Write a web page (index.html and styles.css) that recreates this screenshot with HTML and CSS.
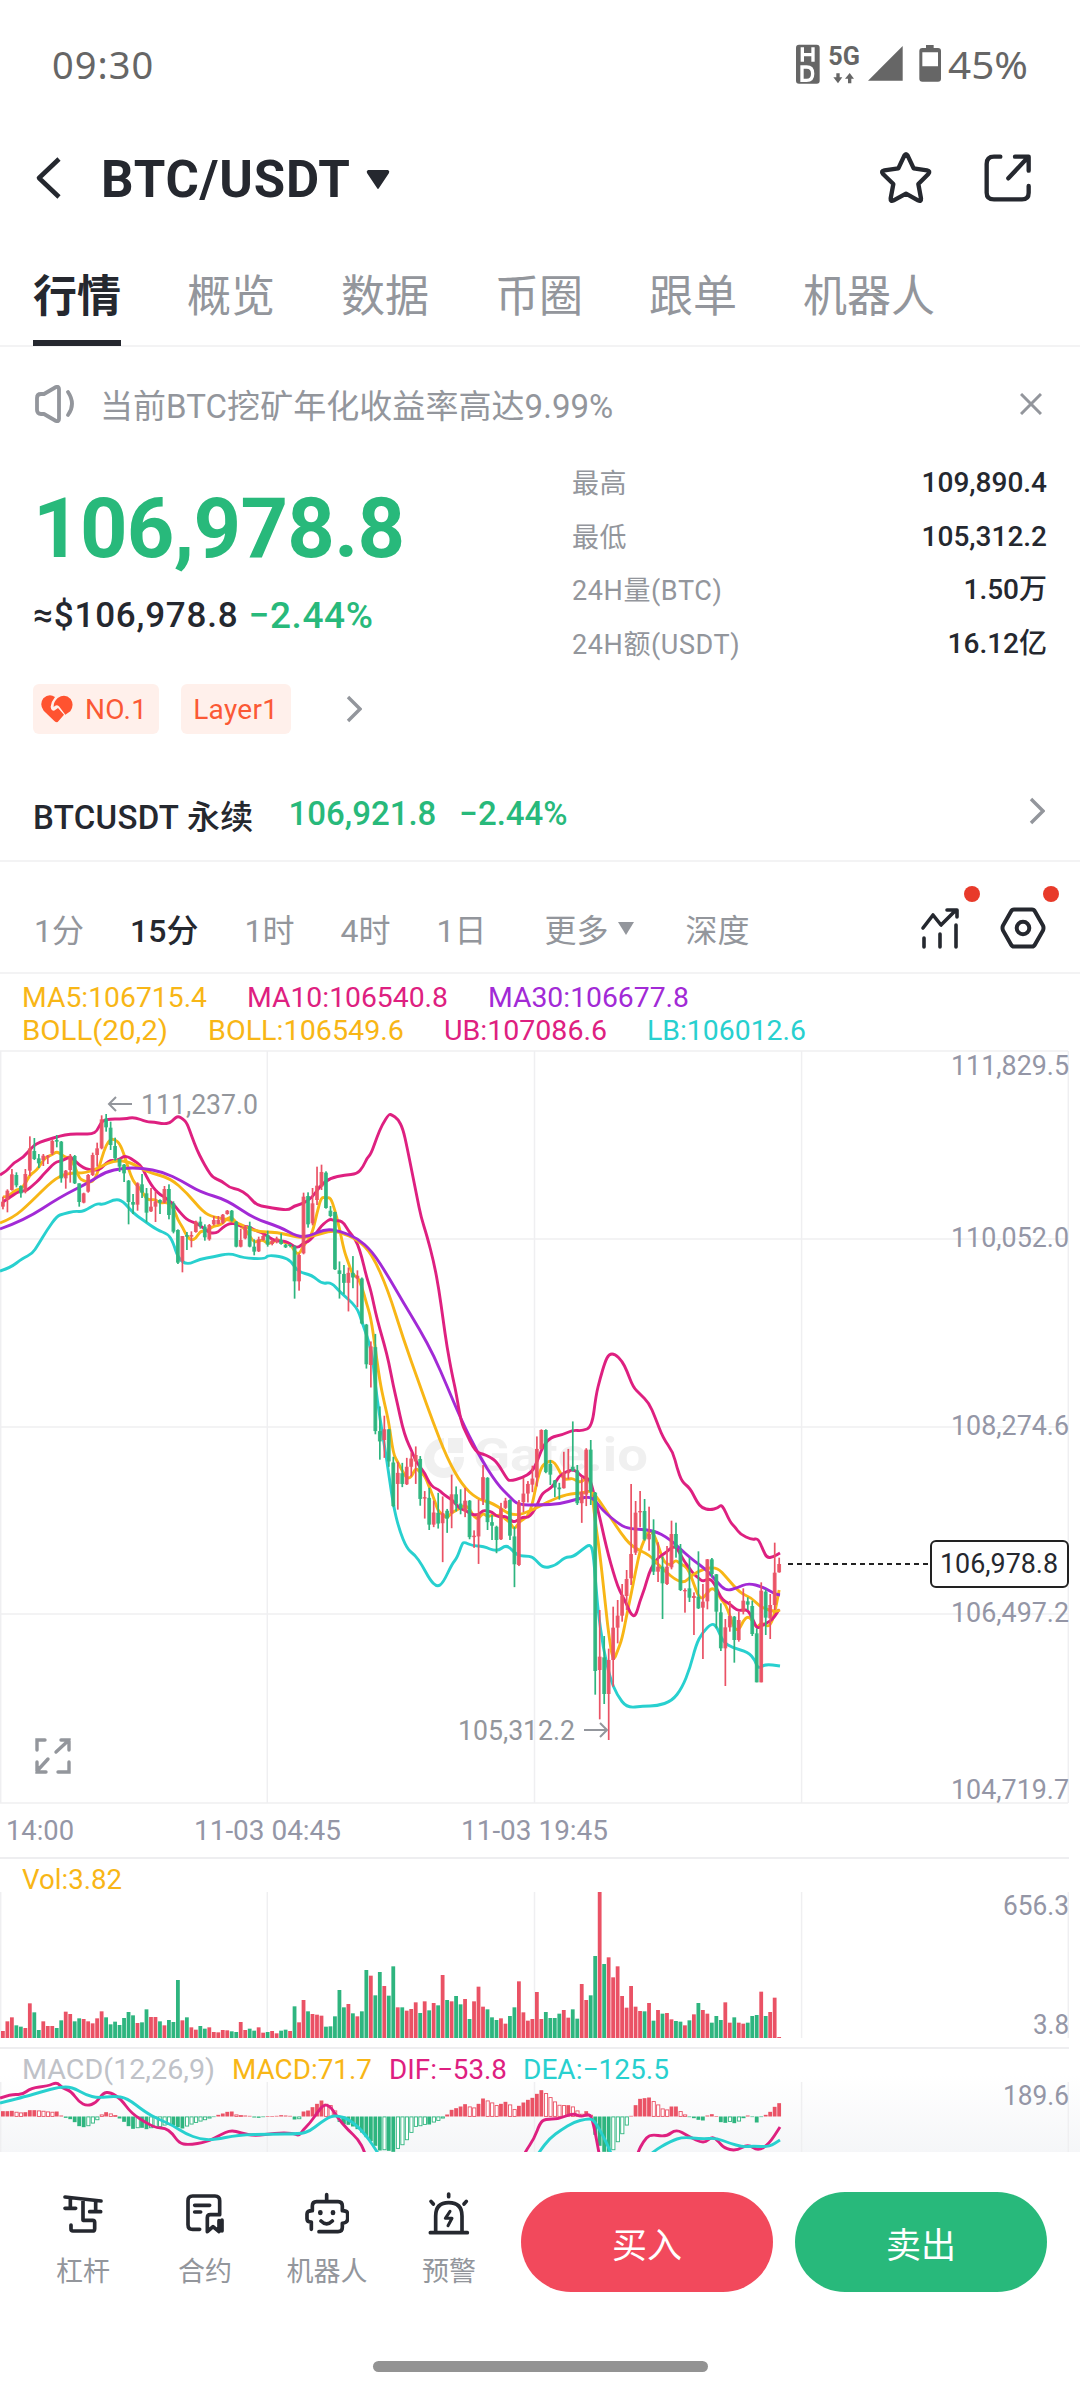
FILE: index.html
```html
<!DOCTYPE html>
<html lang="zh-CN">
<head>
<meta charset="utf-8">
<title>BTC/USDT</title>
<link rel="stylesheet" href="styles.css">
</head>
<body>
<div class="status">
  <span class="clock">09:30</span>
  <div class="status-icons">
    <svg width="250" height="56" viewBox="0 0 750 168">
      <rect x="3" y="26" width="71" height="117" rx="9" fill="#666"/>
      <g fill="none" stroke="#fff" stroke-width="10"><path d="M22 34v43M54 34v43M22 56h32"/><path d="M21 97v35M21 93h14q18 0 18 20t-18 20H21z"/></g>
      <text class="net" x="100" y="86" textLength="95" lengthAdjust="spacingAndGlyphs">5G</text>
      <g fill="#666"><path d="M124 112h10v12h8l-13 18-14-18h9zM159 142h10v-14h8l-13-17-14 17h9z"/><path d="M219 134L323 30v104z"/><path d="M393 27h23v9h13q9 0 9 9v83q0 9-9 9h-47q-9 0-9-9V45q0-9 9-9h11zM382 49v42h47V49z" fill-rule="evenodd"/></g>
      <text class="batt" x="459" y="129" textLength="240" lengthAdjust="spacingAndGlyphs">45%</text>
    </svg>
  </div>
</div>
<header class="head">
  <svg class="back" width="28" height="44" viewBox="0 0 28 44"><path d="M25 3L5 22l20 19" fill="none" stroke="#25282f" stroke-width="4.6" stroke-linejoin="round"/></svg>
  <h1>BTC/USDT</h1>
  <svg class="caret" width="24" height="20" viewBox="0 0 24 20"><path d="M2 0h20q2 1 1 3L13 18q-1 2-2 0L1 3Q0 1 2 0z" fill="#25282f"/></svg>
  <svg class="star" width="54" height="54" viewBox="0 0 162 162"><path d="M76 14q5-9 10 0l18 38 40 6q11 2 4 11l-30 30 8 43q1 11-9 6l-36-20-37 20q-10 5-9-6l8-43L12 69q-7-9 4-11l42-6z" fill="none" stroke="#25282f" stroke-width="13" stroke-linejoin="round"/></svg>
  <svg width="48" height="48" viewBox="0 0 144 144"><path d="M49 8H30Q8 8 8 30v86q0 20 22 20h84q20 0 20-20V96M93 8h41v42M132 10L73 73" fill="none" stroke="#25282f" stroke-width="13" stroke-linecap="round" stroke-linejoin="round"/></svg>
</header>
<nav class="tabs"><span class="on">行情</span><span>概览</span><span>数据</span><span>币圈</span><span>跟单</span><span>机器人</span></nav>
<div class="notice">
  <svg width="42" height="38" viewBox="0 0 42 38"><path d="M10 9L22 2q3-1 3 2v30q0 3-3 2L10 29H7q-4 0-4-4V13q0-4 4-4zM34 7q8 12 0 23" fill="none" stroke="#93969c" stroke-width="3.8" stroke-linecap="round" stroke-linejoin="round"/></svg>
  <p>当前BTC挖矿年化收益率高达9.99%</p>
  <svg width="22" height="22" viewBox="0 0 22 22"><path d="M1 1l20 20M21 1L1 21" stroke="#93969c" stroke-width="3"/></svg>
</div>
<section class="quote">
  <div class="price">
    <strong>106,978.8</strong>
    <div class="fiat"><span>≈$106,978.8</span><em>−2.44%</em></div>
    <div class="tags">
      <span class="tag"><svg width="32" height="28" viewBox="0 0 96 84"><path d="M48 82Q44 82 40 78L8 47Q-6 28 7 10 24-6 42 6 31 19 29 35q1 12 10 12l12-8 18 20-17 20q-2 3-4 3zM50 9Q72-6 89 12q12 18-1 37L73 59 54 34Q46 27 38 36q-1-15 12-27z" fill="#ff5330"/></svg><b class="rank">NO.1</b></span>
      <span class="tag layer">Layer1</span>
      <svg class="more" width="16" height="28" viewBox="0 0 16 28"><path d="M2 2l12 12L2 26" fill="none" stroke="#93969c" stroke-width="3.4"/></svg>
    </div>
  </div>
  <dl class="stats">
    <dt>最高</dt><dd>109,890.4</dd>
    <dt>最低</dt><dd>105,312.2</dd>
    <dt>24H量(BTC)</dt><dd>1.50万</dd>
    <dt>24H额(USDT)</dt><dd>16.12亿</dd>
  </dl>
</section>
<div class="perp">
  <span class="name">BTCUSDT 永续</span><span class="up p">106,921.8</span><span class="up c">−2.44%</span>
  <svg width="16" height="28" viewBox="0 0 16 28"><path d="M2 2l12 12L2 26" fill="none" stroke="#93969c" stroke-width="3.4"/></svg>
</div>
<div class="periods">
  <span>1分</span><span class="on">15分</span><span>1时</span><span>4时</span><span>1日</span><span class="drop">更多<i></i></span><span>深度</span>
  <div class="tools">
    <div class="tool trend"><svg width="40" height="42" viewBox="0 0 40 42"><path d="M3 21L13 8l8 10L35 4M27 3h10v7M4 31v9M20 27v13M36 18v22" fill="none" stroke="#25282f" stroke-width="3.6" stroke-linecap="round" stroke-linejoin="round"/></svg><i></i></div>
    <div class="tool"><svg width="46" height="42" viewBox="0 0 46 42"><path d="M14 2.500h18q2 0 3 2l8 14q1 2.500 0 5l-8 14q-1 2-3 2H14q-2 0-3-2l-8-14q-1-2.500 0-5l8-14q1-2 3-2z" fill="none" stroke="#25282f" stroke-width="4"/><circle cx="23" cy="21" r="6.300" fill="none" stroke="#25282f" stroke-width="4"/></svg><i></i></div>
  </div>
</div>
<svg id="chart" class="chart" width="1080" height="1178" viewBox="0 974 1080 1178"></svg>
<footer class="bar">
  <div class="links">
    <div><svg width="44" height="44" viewBox="0 0 132 132"><path d="M12 15l108 12M28 18v30M12 49h32M104 27v31M86 59h33M66 22v63h29q6 0 6 6v19q0 7-7 7H36q-6 0-6-6V99" /></svg><span>杠杆</span></div>
    <div><svg width="44" height="44" viewBox="0 0 132 132"><path d="M50 112H29Q15 112 15 98V26q0-14 14-14h67q14 0 14 14v42H82q-9 0-9 9v42l17-15 18 15V86M35 40h45M35 60h18M117 84v33l-10-9"/></svg><span>合约</span></div>
    <div><svg width="44" height="44" viewBox="0 0 132 132"><path d="M65 8v21M42 119h57q13 0 13-13V94q16-2 16-14V66q0-10-16-10v-14q0-13-13-13H35q-13 0-13 13v14Q6 56 6 66v14q0 10 13 10v22M48 87q17 17 34 0"/><path class="eyes" d="M46 61v2M84 61v2"/></svg><span>机器人</span></div>
    <div><svg width="44" height="44" viewBox="0 0 132 132"><path d="M10 122h111M26 120V72q0-40 39-40 40 0 40 40v48M65 6v8M12 28l7 8M118 28l-7 8"/><path class="bolt" d="M69 58L55 79h20L63 101"/></svg><span>预警</span></div>
  </div>
  <button class="buy">买入</button>
  <button class="sell">卖出</button>
</footer>
<div class="home"><i></i></div>
<script src="chart.js"></script>
</body>
</html>
```
FILE: styles.css
```css
* { box-sizing: border-box; margin: 0; padding: 0; }
body {
  width: 1080px; height: 2400px; overflow: hidden; background: #fff; color: #25282f;
  font-family: Roboto, "Noto Sans CJK SC", sans-serif;
}
svg { display: block; flex: none; }
.status { height: 128px; display: flex; justify-content: space-between; align-items: center; padding: 0 35px 0 52px; color: #666; }
.clock { font: 38px/50px "Noto Sans", sans-serif; letter-spacing: 1px; }
.net { font: 700 78px Roboto, sans-serif; fill: #666; }
.batt { font: 114px "Noto Sans", sans-serif; fill: #666; }
.head { height: 100px; display: flex; align-items: center; padding: 0 48px 0 34px; }
.head h1 { font-size: 51px; line-height: 60px; font-weight: 700; margin: 4px 0 0 39px; letter-spacing: .8px; }
.caret { margin-left: 15px; margin-top: 4px; }
.star { margin-left: auto; margin-right: 51px; }
.tabs { height: 119px; display: flex; gap: 66px; padding-left: 33px; border-bottom: 2px solid #f3f3f4; font-size: 44px; line-height: 138px; color: #93969c; }
.tabs .on { color: #25282f; font-weight: 700; border-bottom: 6px solid #25282f; height: 118px; }
.notice { height: 114px; display: flex; align-items: center; padding: 0 38px 0 34px; color: #93969c; }
.notice p { font-size: 33px; margin: -1px auto 0 24px; letter-spacing: .05px; }
.quote { height: 300px; display: flex; justify-content: space-between; padding: 0 33px; }
.price { display: flex; flex-direction: column; }
.price strong { font-size: 83px; line-height: 96px; color: #28b97b; margin-top: 20px; letter-spacing: -.7px; }
.fiat { display: flex; align-items: center; gap: 10px; font-size: 35px; line-height: 44px; font-weight: 500; margin-top: 17px; letter-spacing: .8px; }
.fiat em { font-style: normal; font-size: 37px; letter-spacing: .6px; color: #28b97b; }
.tags { display: flex; align-items: center; gap: 22px; margin-top: 46px; font-size: 28px; color: #fb5935; }
.tag { height: 50px; display: flex; align-items: center; gap: 12px; padding: 0 12px 0 8px; border-radius: 6px; background: #fff0eb; letter-spacing: .3px; }
.tag.layer { padding: 0 13px 0 12px; }
.rank { font-weight: 400; }
.more { margin-left: 33px; }
.stats { width: 475px; display: grid; grid-template-columns: auto auto; grid-auto-rows: 53.5px; justify-content: space-between; line-height: 53.5px; font-size: 27px; margin-top: -5px; }
.stats dt { color: #93969c; letter-spacing: .6px; padding-top: 2px; }
.stats dd { font-weight: 500; font-size: 28px; text-align: right; }
.perp { height: 101px; display: flex; align-items: center; padding: 7px 35px 0 33px; border-bottom: 2px solid #f3f3f4; font-size: 33px; }
.perp .name { margin-top: 2px; font-weight: 500; letter-spacing: .3px; }
.perp .up { color: #28b97b; font-weight: 500; margin-top: -2px; }
.perp .p { margin-left: 35px; }
.perp .c { margin-left: 23px; margin-right: auto; }
.perp svg { margin-top: -7px; }
.periods { height: 112px; display: flex; align-items: center; padding: 22px 34px 0 34px; border-bottom: 2px solid #f3f3f4; font-size: 32px; color: #93969c; }
.periods span { margin-right: 46px; }
.periods .on { color: #25282f; font-weight: 500; }
.periods .drop { display: flex; align-items: center; gap: 10px; margin: 0 51px 0 12px; }
.drop i { border: 8px solid transparent; border-top: 13px solid #93969c; border-bottom: 0; }
.tools { margin-left: auto; display: flex; gap: 40px; }
.tool { position: relative; }
.tool i { position: absolute; width: 16px; height: 16px; border-radius: 50%; background: #e83a2a; top: -21px; right: -13px; }
.trend i { right: -20px; }
.chart { font-family: Roboto, sans-serif; font-size: 28px; }
.bar { height: 188px; display: flex; gap: 22px; padding: 40px 33px 48px 22px; align-items: flex-start; background: #fff; }
.links { display: grid; grid-template-columns: repeat(4, 122px); margin-right: -11px; }
.links div { display: flex; flex-direction: column; align-items: center; font-size: 27px; line-height: 36px; color: #93969c; gap: 18px; }
.links svg { fill: none; stroke: #25282f; stroke-width: 11; stroke-linecap: round; stroke-linejoin: round; }
.links .eyes { stroke-width: 14; }
.links .bolt { stroke-width: 9; }
.bar button { width: 252px; height: 100px; border: 0; border-radius: 50px; color: #fff; font: 35px "Noto Sans CJK SC", sans-serif; }
.buy { background: #f2495c; }
.sell { background: #28b97b; }
.home { height: 60px; padding-top: 21px; }
.home i { display: block; width: 335px; height: 11px; margin: 0 auto; border-radius: 6px; background: #939393; }
```
FILE: chart.js
```js
const RED = '#ea5265', GREEN = '#2eb57f', YELLOW = '#f8b616', PINK = '#de2080', PURPLE = '#a22ad6', TEAL = '#28d0cf', GREY = '#93969c', MUTE = '#9496a6';
const STEP = 4.487, X0 = 2.9;
const x = i => X0 + i * STEP;

// Volume per bar, in thirds of a pixel; g = falling, r = rising
const volumes = `21r 50r 62r 38g 34g 30r 104r 77g 24g 50r 36r 36r 30g 53g 79r 72r 50g 59g 57r 50r 44r 59r 80r 62g 41g 49g 39g 60g 78g 68g 45r 47g 86g 63r 63r 50g 38r 54g 48g 174g 53r 62g 32r 25r 36g 28g 32r 18r 17r 24r 23r 20g 18g 48r 24r 28g 22g 32r 16r 18g 21r 14r 22g 25g 21r 95g 47r 114r 80g 72r 70r 67r 34g 35g 65g 144g 92g 102r 74g 65r 80g 204g 187r 128g 198g 156r 127g 215g 92r 92g 82r 87r 107r 75g 110r 83g 105r 98g 189r 114g 110r 126g 101g 117r 57g 110r 154r 94r 86g 62g 54g 59r 43r 66g 92g 170r 77r 52r 57r 138r 57r 78g 60g 60g 73g 84r 61r 86g 58g 162r 114r 128g 246g 438r 222g 242r 182r 215r 126r 91r 156r 94r 81r 80g 105r 52g 84r 73g 75r 56r 51g 49g 38r 53g 71r 105g 84r 73r 46g 66g 54g 107r 46r 62g 46r 43r 46g 66g 69g 139r 66g 78r 121r 3r`.split(' ');

// Candles: side, high, low, body top, body bottom. Each block has its own origin and unit.
const blocks = [
  { y: 1040, unit: 3, rows: `r470,508,485,500 r448,517,452,480 r387,452,403,450 g397,442,405,436 g436,473,438,460 r387,460,402,456 r289,408,325,392 g294,360,333,357 g342,384,355,370 r342,378,347,360 r345,372,347,352 r298,345,303,340 g285,322,300,305 g303,428,305,415 r390,446,392,415 r342,428,347,390 g345,432,348,430 g430,500,430,486 r458,490,460,488 r402,458,405,455 r338,408,345,405 r308,380,325,345 r226,328,238,325 g222,275,236,262 g245,330,263,315 g293,362,318,355 g355,396,357,380 g372,426,374,400 g420,553,422,486 g462,522,486,494 r427,512,430,494 g402,474,433,458 g444,547,460,518 r444,516,500,514 r454,546,484,500 g478,522,480,488 r438,490,447,488 g433,538,447,525 g484,580,490,575 g568,672,570,668 r588,697,588,664 g576,630,585,590 r574,622,585,590 r542,578,545,576 g530,566,545,558 g553,602,560,592 r552,602,555,598 r528,556,540,553 r528,553,540,552 r522,552,524,548 r510,524,512,522 g510,545,512,542 g543,622,545,620 r566,622,600,620 r555,598,560,595 g545,622,558,620 g598,646,620,635 r590,636,598,634 r583,602,588,600 g572,620,585,614 r598,616,602,612 r590,610,595,606 g580,614,600,612 g612,624,614,622 g612,622,614,618 g616,776,620,724 r640,752,645,724 r458,643,470,640 g457,563,468,553 r444,556,490,550 r380,495,437,480 r374,450,396,440 g394,506,398,504 g498,532,512,528 g515,690,516,688` },
  { y: 1040, unit: 2.8, rows: `g620,724,645,655 g630,712,655,680 r637,760,652,680 g605,695,652,665 r645,748,660,668 g665,796,668,794 g795,920,797,908 r844,973,858,910 g823,1104,860,1095 g1026,1175,1095,1124 r1052,1170,1090,1120 g1090,1195,1090,1180 g1167,1308,1183,1305 r1181,1315,1212,1243 g1184,1252,1213,1243 r1170,1246,1195,1244 r1155,1222,1172,1195 r1138,1243,1162,1180 g1165,1304,1173,1285 r1263,1340,1280,1284 g1254,1372,1282,1357 r1290,1364,1323,1357 g1268,1368,1324,1354 r1278,1462,1325,1353 g1313,1380,1318,1340 r1217,1367,1272,1325 g1250,1320,1272,1298 g1258,1328,1298,1312 r1254,1336,1290,1320 g1288,1398,1290,1392 r1373,1422,1388,1392 r1287,1467,1325,1390 r1190,1302,1224,1287 g1224,1372,1226,1350 g1330,1400,1350,1360 g1360,1437,1363,1400 r1296,1400,1312,1398 r1282,1313,1290,1310 g1286,1400,1288,1388 g1363,1532,1390,1468 r1288,1473,1295,1470 r1226,1322,1270,1294 r1235,1295,1243,1270 r1192,1266,1228,1245 r1110,1250,1145,1225 r1090,1146,1092,1145 g1090,1213,1092,1210 g1176,1246,1187,1217 g1232,1280,1233,1253 g1240,1287,1253,1258 r1153,1256,1212,1255 r1145,1230,1208,1213 g1068,1208,1195,1206 g1190,1302,1205,1297 r1223,1352,1265,1297 r1143,1305,1147,1273 g1120,1302,1147,1265` },
  { y: 1300, unit: 3, rows: `g576,1184,578,1113 r930,1258,1070,1110 g1008,1212,1072,1182 r1046,1320,1080,1182 r920,1160,983,1080 r900,1030,947,983 r852,965,888,947 r810,930,837,888 r552,855,762,835 r603,765,638,758 r573,682,633,637 g597,722,633,718 r620,752,702,718 g658,825,690,815 r727,846,800,815 g770,957,800,850 r738,855,800,852 r662,808,702,802 g668,773,702,743 g732,873,750,870 r865,938,870,874 g773,906,865,893 r877,1005,888,894 g754,927,890,925 r852,1077,905,923 r777,928,778,904 g774,832,778,822 g822,985,823,935 g910,1053,937,1045 r957,1158,982,1045 r903,995,948,982 g948,1088,950,1020 r935,1025,960,1020 r865,943,902,935 g892,930,904,914 g902,1008,918,1002 g985,1147,1000,1147 r847,1147,872,1147 g868,1005,875,953 r882,1017,915,955 r728,930,818,915 r773,818,792,817` }
];
const candles = blocks.flatMap(b => b.rows.split(' ').map(s => {
  const [hi, lo, top, bot] = s.slice(1).split(',').map(v => b.y + v / b.unit);
  return { up: s[0] === 'r', hi, lo, top, bot, close: s[0] === 'r' ? top : bot };
}));

const macd = [16,16,17,14,12,13,19,19,18,17,15,14,15,3,-4,-8,-17,-29,-32,-28,-20,-10,6,13,9,4,-6,-16,-29,-37,-34,-34,-38,-34,-33,-30,-26,-24,-27,-32,-36,-29,-23,-18,-14,-10,-5,-1,5,9,14,15,6,4,3,2,-3,-4,-2,1,1,2,4,3,2,-9,-7,15,18,28,38,48,38,34,18,-15,-23,-25,-30,-38,-48,-62,-74,-88,-102,-100,-103,-106,-96,-85,-70,-48,-30,-28,-24,-24,-17,-12,-5,6,20,25,30,37,30,27,38,54,48,42,34,38,44,36,22,32,42,50,56,68,79,70,58,45,35,34,34,30,18,8,16,5,-55,-88,-106,-106,-100,-76,-52,-26,2,34,53,55,57,46,36,24,21,30,30,16,6,-2,-5,-10,-12,3,7,1,-17,-19,-15,-20,-14,-4,3,0,-18,0,5,14,29,40];

const upper = '0,1175 7,1171 13,1163 23,1158 33,1146 40,1142 50,1139 60,1136 70,1134 83,1134 92,1134 97,1131 100,1124 105,1119 125,1119 134,1117 147,1122 154,1122 163,1124 170,1123 174,1119 178,1116 183,1119 187,1123 192,1137 197,1150 202,1160 207,1169 213,1178 222,1181 230,1188 238,1189 248,1195 256,1205 267,1207 278,1209 289,1210 294,1206 302,1204 312,1198 320,1186 330,1178 345,1175 357,1174 363,1167 367,1158 371,1154 377,1137 382,1125 389,1114 392,1115 398,1119 403,1129 407,1147 412,1172 417,1197 421,1217 427,1236 434,1263 439,1290 443,1319 447,1347 452,1374 456,1392 461,1422 467,1435 473,1447 478,1453 483,1454 490,1457 497,1462 507,1479 510,1481 522,1478 532,1472 537,1462 543,1446 551,1437 562,1435 573,1430 582,1431 592,1427 596,1395 600,1379 605,1362 609,1354 615,1354 622,1361 627,1371 633,1387 640,1394 649,1403 655,1417 663,1438 673,1452 677,1468 682,1482 690,1488 697,1502 702,1508 710,1510 718,1508 722,1504 730,1522 735,1527 740,1534 752,1540 758,1538 763,1550 767,1558 773,1557 780,1553';
const lower = '0,1271 10,1268 23,1258 32,1254 38,1245 47,1230 57,1216 63,1214 75,1211 83,1212 97,1203 103,1205 115,1199 123,1201 133,1213 143,1220 157,1230 168,1234 173,1242 178,1258 187,1265 200,1259 213,1257 230,1253 243,1258 265,1259 268,1255 283,1257 291,1261 298,1272 312,1275 322,1284 331,1282 340,1292 357,1307 362,1322 372,1351 375,1383 380,1419 387,1461 393,1504 399,1529 407,1549 415,1555 422,1565 430,1580 437,1587 443,1583 452,1564 457,1558 462,1544 464,1542 473,1546 483,1546 497,1552 507,1544 517,1556 530,1556 535,1559 543,1568 555,1566 565,1557 573,1557 583,1549 590,1544 593,1551 596,1586 598,1610 603,1647 610,1678 617,1695 627,1708 643,1706 657,1706 672,1701 682,1688 690,1668 696,1645 702,1633 712,1623 717,1627 723,1642 733,1648 748,1652 755,1660 758,1669 765,1664 780,1666';
const ma30 = '0,1229 25,1220 60,1197 90,1182 105,1172 123,1168 142,1168 163,1172 182,1181 200,1192 227,1200 253,1218 280,1227 298,1237 310,1236 325,1229 340,1231 357,1238 372,1251 388,1276 403,1302 420,1330 434,1356 447,1386 460,1417 478,1454 497,1484 510,1497 518,1505 540,1505 560,1504 577,1499 592,1496 602,1510 620,1525 630,1529 653,1530 670,1539 690,1558 707,1570 717,1582 726,1591 737,1588 748,1583 763,1587 775,1594 780,1595';
const middle = '0,1223 13,1218 30,1203 53,1180 67,1173 87,1173 100,1167 115,1160 130,1162 147,1172 170,1178 187,1193 203,1212 213,1217 230,1220 240,1224 257,1232 277,1232 300,1238 313,1236 330,1231 340,1232 358,1240 372,1254 388,1290 403,1338 420,1386 433,1422 447,1458 462,1485 477,1499 493,1503 513,1517 533,1510 547,1502 567,1494 583,1493 592,1490 607,1512 620,1532 632,1547 650,1555 660,1567 682,1585 692,1575 703,1569 717,1567 727,1578 740,1593 752,1598 760,1607 775,1612 780,1610';
const dif = '0,2098 12,2094 22,2095 31,2088 48,2086 57,2082 62,2088 71,2091 79,2102 87,2106 96,2103 103,2093 110,2092 121,2099 131,2113 148,2124 157,2128 165,2128 172,2133 179,2143 188,2145 207,2142 220,2135 231,2130 241,2133 255,2136 275,2133 293,2133 299,2136 303,2130 310,2123 317,2113 324,2104 331,2107 337,2117 348,2130 358,2139 365,2152 380,2200 500,2200 525,2152 534,2139 540,2123 545,2119 559,2119 573,2113 581,2117 588,2114 592,2117 599,2152 605,2190 625,2190 638,2152 643,2142 650,2134 666,2137 676,2129 688,2136 704,2144 712,2136 719,2142 724,2148 736,2151 748,2144 758,2151 769,2144 780,2127';
const dea = '0,2103 24,2097 41,2092 59,2087 72,2087 86,2095 98,2098 114,2096 127,2098 145,2112 158,2119 172,2125 186,2134 200,2139 213,2140 238,2135 269,2134 300,2134 310,2131 320,2123 331,2116 339,2116 348,2119 362,2130 377,2151 400,2190 515,2190 539,2152 550,2138 561,2130 574,2122 586,2119 593,2119 600,2130 611,2152 620,2180 635,2170 652,2152 671,2141 683,2137 702,2139 716,2138 729,2143 743,2147 753,2146 769,2147 780,2140';

// Moving average of the closes; `lead` holds the values before the window is full
function average(n, lead) {
  return candles.map((c, i) => {
    const y = i < n - 1 ? lead[i] : candles.slice(i - n + 1, i + 1).reduce((s, k) => s + k.close, 0) / n;
    return [x(i), y];
  });
}
const ma5 = average(5, [1197, 1197, 1193, 1190]);
const ma10 = average(10, [1202, 1199, 1196, 1193, 1191, 1191, 1188, 1184, 1180]);
const points = s => s.split(' ').map(p => p.split(',').map(Number));

// Smooth line through the midpoints of the given points
function curve(pts, color) {
  let d = `M${pts[0]}`;
  for (let i = 1; i < pts.length - 1; i++) {
    const m = [(pts[i][0] + pts[i + 1][0]) / 2, (pts[i][1] + pts[i + 1][1]) / 2];
    d += `Q${pts[i]} ${m}`;
  }
  d += `L${pts[pts.length - 1]}`;
  return `<path d="${d}" fill="none" stroke="${color}" stroke-width="2.9" stroke-linejoin="round"/>`;
}
const line = (x1, y1, x2, y2, c = '#efeff1') => `<path d="M${x1} ${y1}L${x2} ${y2}" stroke="${c}" stroke-width="1.5"/>`;
const label = (s, l, r, y, c) => `<text x="${l - 1}" y="${y}" textLength="${r - l + 1}" lengthAdjust="spacingAndGlyphs" fill="${c}">${s}</text>`;

let out = '<defs><linearGradient id="fade" x2="0" y2="1"><stop offset="0" stop-color="#fff"/><stop offset="1" stop-color="#f5f6f8"/></linearGradient></defs>';
out += '<rect y="2075" width="1080" height="77" fill="url(#fade)"/>';
for (const y of [1051, 1239, 1427, 1614, 1803]) out += line(0, y, 1068, y);
for (const gx of [.7, 267.3, 534.5, 801.6, 1068.3]) out += line(gx, 1051, gx, 1803) + line(gx, 1892, gx, 2038) + line(gx, 2082, gx, 2152);
out += line(0, 1858, 1069, 1858, '#e9e9eb') + line(0, 2048, 1069, 2048, '#e9e9eb');
out += '<g fill="#f0f0f0"><path d="M444 1438a20 20 0 1 0 20 19h-10a10 10 0 1 1-10-9z"/><path d="M448 1438h15v15h-15z"/><text x="473" y="1471" font-size="46" font-weight="700" textLength="175" lengthAdjust="spacingAndGlyphs">Gate.io</text></g>';

const stack = [[middle, YELLOW], [ma30, PURPLE], [upper, PINK], [lower, TEAL]];
out += curve(ma5, YELLOW) + curve(ma10, PINK) + stack.map(([p, c]) => curve(points(p), c)).join('');
candles.forEach((c, i) => {
  const f = c.up ? RED : GREEN;
  out += `<rect x="${x(i) - .8}" y="${c.hi}" width="1.7" height="${c.lo - c.hi}" fill="${f}"/><rect x="${x(i) - 1.9}" y="${c.top}" width="3.8" height="${Math.max(1, c.bot - c.top)}" fill="${f}" fill-opacity=".92"/>`;
});
volumes.forEach((v, i) => {
  const h = parseInt(v) / 3;
  out += `<rect x="${x(i) - 1.9}" y="${2038 - h}" width="3.8" height="${h}" fill="${v.endsWith('r') ? RED : GREEN}"/>`;
});
macd.forEach((v, i) => {
  const h = Math.abs(v) / 3, f = v > 0 ? RED : GREEN, y = v > 0 ? 2116.5 - h : 2116.5;
  const hollow = i && Math.abs(v) < Math.abs(macd[i - 1]) && h > 1;
  out += hollow
    ? `<rect x="${x(i) - 1.4}" y="${y + .4}" width="3.2" height="${h - .5}" fill="#fff" stroke="${f}" stroke-width=".9"/>`
    : `<rect x="${x(i) - 1.9}" y="${y}" width="3.8" height="${Math.max(.6, h)}" fill="${f}"/>`;
});
out += curve(points(dif), PINK) + curve(points(dea), TEAL);

out += label('MA5:106715.4', 23, 207, 1007, YELLOW) + label('MA10:106540.8', 248, 448, 1007, PINK) + label('MA30:106677.8', 489, 689, 1007, PURPLE);
out += label('BOLL(20,2)', 23, 168, 1040, YELLOW) + label('BOLL:106549.6', 209, 404, 1040, YELLOW) + label('UB:107086.6', 445, 607, 1040, PINK) + label('LB:106012.6', 648, 806, 1040, TEAL);
[['111,829.5', 1075], ['110,052.0', 1247], ['108,274.6', 1435], ['106,497.2', 1622], ['104,719.7', 1799]].forEach(([s, y]) => out += label(s, 952, 1069, y, MUTE));
out += label('111,237.0', 142, 258, 1114, GREY) + label('105,312.2', 459, 575, 1740, GREY);
out += `<path d="M132 1104H109M116 1097l-7 7 7 7M584 1730h23M600 1723l7 7-7 7" fill="none" stroke="${GREY}" stroke-width="2"/>`;
out += '<path d="M788 1564H930" stroke="#222" stroke-width="2" stroke-dasharray="5 4"/><rect x="931" y="1541" width="137" height="46" rx="5" fill="#fff" stroke="#222" stroke-width="2"/>' + label('106,978.8', 941, 1058, 1573, '#25282f');
out += `<path d="M45 1740h-8v10M61 1740h8v10M69 1740l-13 12M37 1762v10h9M37 1771l11-12M69 1762v10h-11" fill="none" stroke="${GREY}" stroke-width="3.4" stroke-linecap="round"/>`;
out += label('14:00', 7, 74, 1840, MUTE) + label('11-03 04:45', 195, 341, 1840, MUTE) + label('11-03 19:45', 462, 608, 1840, MUTE);
out += label('Vol:3.82', 23, 122, 1889, YELLOW) + label('656.3', 1004, 1069, 1915, MUTE) + label('3.8', 1034, 1069, 2034, MUTE);
out += label('MACD(12,26,9)', 23, 215, 2079, '#bfc2c8') + label('MACD:71.7', 233, 372, 2079, YELLOW) + label('DIF:−53.8', 390, 507, 2079, PINK) + label('DEA:−125.5', 524, 669, 2079, TEAL) + label('189.6', 1004, 1069, 2105, MUTE);
document.getElementById('chart').innerHTML = out;
```
